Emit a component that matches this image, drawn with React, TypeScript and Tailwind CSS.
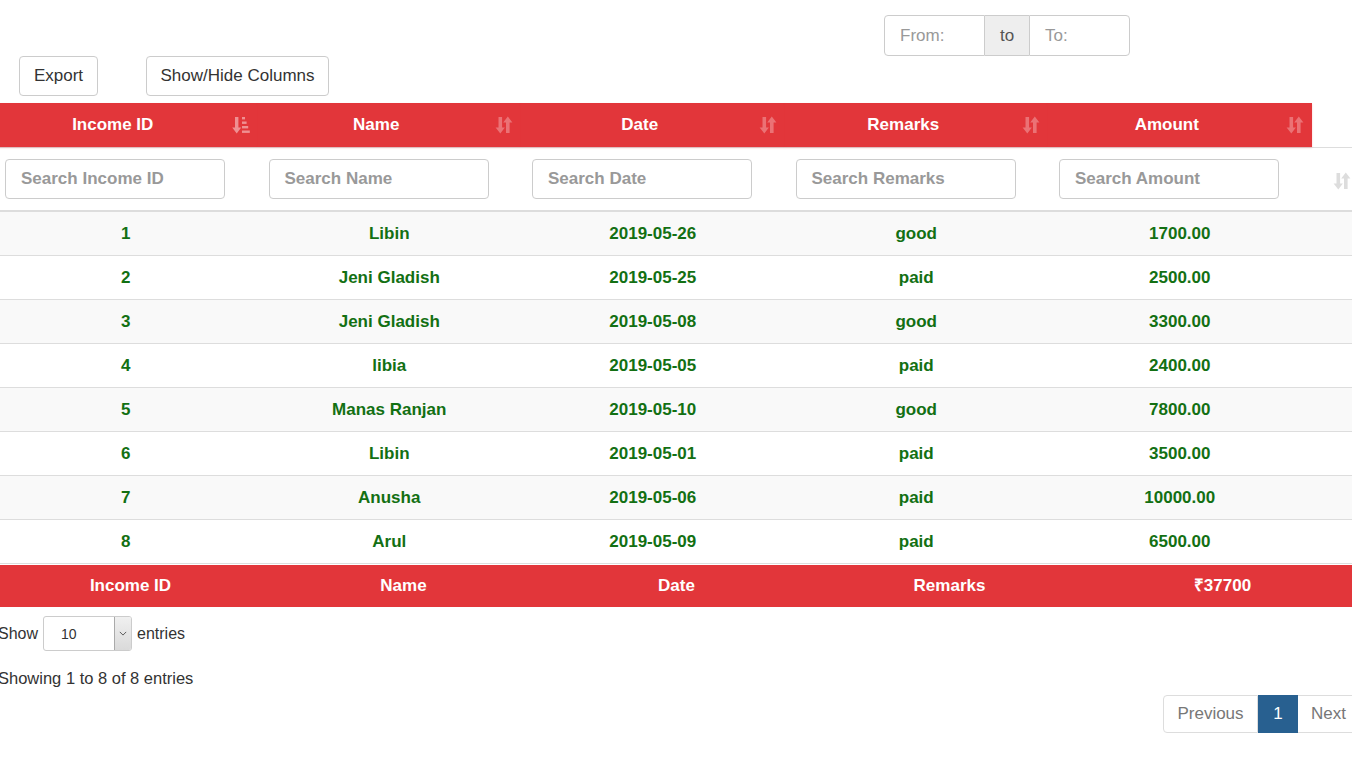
import React from 'react';

const rows = [
  { id: 1, name: 'Libin', date: '2019-05-26', remarks: 'good', amount: '1700.00' },
  { id: 2, name: 'Jeni Gladish', date: '2019-05-25', remarks: 'paid', amount: '2500.00' },
  { id: 3, name: 'Jeni Gladish', date: '2019-05-08', remarks: 'good', amount: '3300.00' },
  { id: 4, name: 'libia', date: '2019-05-05', remarks: 'paid', amount: '2400.00' },
  { id: 5, name: 'Manas Ranjan', date: '2019-05-10', remarks: 'good', amount: '7800.00' },
  { id: 6, name: 'Libin', date: '2019-05-01', remarks: 'paid', amount: '3500.00' },
  { id: 7, name: 'Anusha', date: '2019-05-06', remarks: 'paid', amount: '10000.00' },
  { id: 8, name: 'Arul', date: '2019-05-09', remarks: 'paid', amount: '6500.00' },
];

const columns = ['Income ID', 'Name', 'Date', 'Remarks', 'Amount'];

// thick down + up arrows
function SortBoth({ className }: { className?: string }) {
  return (
    <svg viewBox="0 0 18 20" className={className} fill="currentColor">
      <path d="M3.5 2h3.6v10.5h2.8L5.3 18.5 0.6 12.5h2.9z" />
      <path d="M11 18V7.5H8.2L12.8 1.5l4.6 6h-2.8V18z" />
    </svg>
  );
}

// down arrow with stacked bars
function SortAsc({ className }: { className?: string }) {
  return (
    <svg viewBox="0 0 18 20" className={className} fill="currentColor">
      <path d="M3 2h3.4v10.5h2.8l-4.5 6-4.5-6H3z" />
      <rect x="10" y="2" width="3" height="2.4" />
      <rect x="10" y="6.5" width="4.6" height="2.4" />
      <rect x="10" y="11" width="6.2" height="2.4" />
      <rect x="10" y="15.5" width="7.8" height="2.4" />
    </svg>
  );
}

export default function App() {
  return (
    <div
      className="w-[1352px] h-[757px] overflow-hidden bg-white text-[#333]"
      style={{ fontFamily: '"Liberation Sans", Arial, sans-serif' }}
    >
      {/* date range filter */}
      <div className="flex justify-end pt-[15px] pr-[222px]">
        <div className="flex h-[41px] text-[17px]">
          <div className="w-[101px] flex items-center pl-[15px] border border-[#ccc] rounded-l-[4px] text-[#999]">From:</div>
          <div className="w-[44px] flex items-center justify-center border-y border-[#ccc] bg-[#eee] text-[#555]">to</div>
          <div className="w-[101px] flex items-center pl-[15px] border border-[#ccc] rounded-r-[4px] text-[#999]">To:</div>
        </div>
      </div>

      {/* action buttons */}
      <div className="flex gap-[48px] pl-[19px] h-[40px] text-[17px]">
        <button className="w-[79px] h-[40px] border border-[#ccc] rounded-[4px] bg-white text-[#333]">Export</button>
        <button className="w-[183px] h-[40px] border border-[#ccc] rounded-[4px] bg-white text-[#333]">Show/Hide Columns</button>
      </div>

      {/* table */}
      <div className="mt-[7px]">
        <div className="flex h-[44px] -ml-[6px]">
          {columns.map((c, i) => (
            <div
              key={c}
              className="relative w-[263.5px] shrink-0 bg-[#e2363a] flex items-center justify-center pl-[8px] pr-[34px] text-white font-bold text-[17px] shadow-[0_1px_2px_rgba(226,54,58,0.25)]"
            >
              {c}
              {i === 0 ? (
                <SortAsc className="absolute right-[8px] top-[12px] w-[18px] h-[20px] text-white/45" />
              ) : (
                <SortBoth className="absolute right-[8px] top-[12px] w-[18px] h-[20px] text-white/30" />
              )}
            </div>
          ))}
        </div>

        <div className="flex h-[65px] -ml-[6px] border-t border-[#ddd] border-b-2 border-b-[#ddd]">
          {columns.map((c) => (
            <div key={c} className="w-[263.5px] shrink-0 flex items-center pl-[11px] pb-[1px]">
              <div className="w-[220px] h-[40px] border border-[#ccc] rounded-[4px] flex items-center pl-[15px] text-[17px] font-bold text-[#999]">
                Search {c}
              </div>
            </div>
          ))}
          <div className="flex-1 flex items-center justify-end pr-[1px] pt-[3px]">
            <SortBoth className="w-[18px] h-[20px] text-[#ddd]" />
          </div>
        </div>

        {rows.map((r, idx) => (
          <div
            key={r.id}
            className={`flex h-[44px] -ml-[6px] border-b border-[#ddd] text-[17px] font-bold text-[#137013] ${idx % 2 === 0 ? 'bg-[#f9f9f9]' : 'bg-white'}`}
          >
            {[r.id, r.name, r.date, r.remarks, r.amount].map((v, i) => (
              <div key={i} className="w-[263.5px] shrink-0 flex items-center justify-center">
                {v}
              </div>
            ))}
          </div>
        ))}

        <div className="flex h-[42px] -ml-[6px] mt-[1px] bg-[#e2363a] text-white font-bold text-[17px]">
          {['Income ID', 'Name', 'Date', 'Remarks', '₹37700'].map((v) => (
            <div key={v} className="w-[273px] shrink-0 flex items-center justify-center">
              {v}
            </div>
          ))}
        </div>
      </div>

      {/* length + info */}
      <div className="flex items-center h-[35px] mt-[9px] -ml-[2px] text-[16px] text-[#333]">
        <span>Show</span>
        <div className="ml-[5px] w-[89px] h-[35px] border border-[#ccc] rounded-[3px] flex overflow-hidden">
          <div className="flex-1 flex items-center pl-[17px] text-[14px] pt-[2px]">10</div>
          <div className="w-[17px] border-l border-[#aaa] bg-gradient-to-b from-[#f0f0f0] to-[#dadada] flex items-center justify-center">
            <svg viewBox="0 0 10 6" className="w-[8px] h-[5px]" fill="none" stroke="#555" strokeWidth="1.2">
              <path d="M1 1l4 4 4-4" />
            </svg>
          </div>
        </div>
        <span className="ml-[5px]">entries</span>
      </div>

      <div className="flex justify-between">
        <div className="-ml-[2px] mt-[17px] text-[16.5px] text-[#333] leading-[20px]">Showing 1 to 8 of 8 entries</div>
        <div className="flex mt-[44px] -mr-[8px] h-[38px] text-[17px]">
          <div className="w-[95px] flex items-center justify-center border border-[#ddd] rounded-l-[4px] text-[#777]">Previous</div>
          <div className="w-[40px] flex items-center justify-center bg-[#286090] border border-[#286090] text-white">1</div>
          <div className="w-[62px] flex items-center justify-center border border-[#ddd] border-l-0 rounded-r-[4px] text-[#777]">Next</div>
        </div>
      </div>
    </div>
  );
}
